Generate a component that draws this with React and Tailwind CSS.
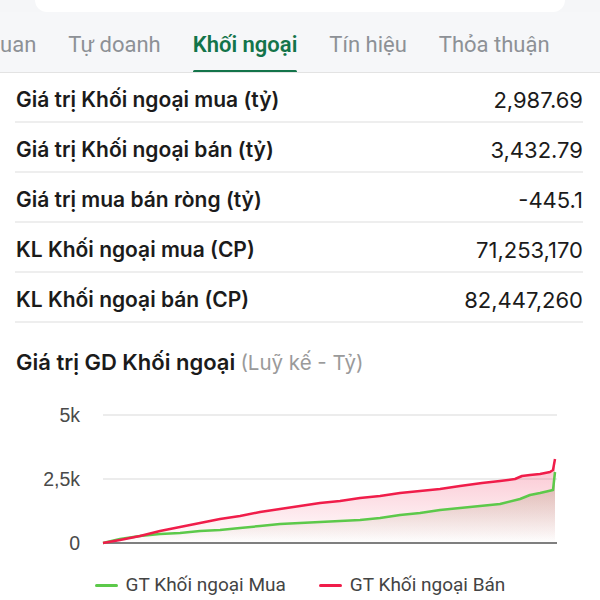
import React from 'react';

const tabs = ['Tổng quan', 'Tự doanh', 'Khối ngoại', 'Tín hiệu', 'Thỏa thuận'];

const rows = [
  { label: 'Giá trị Khối ngoại mua (tỷ)', value: '2,987.69' },
  { label: 'Giá trị Khối ngoại bán (tỷ)', value: '3,432.79' },
  { label: 'Giá trị mua bán ròng (tỷ)', value: '-445.1' },
  { label: 'KL Khối ngoại mua (CP)', value: '71,253,170' },
  { label: 'KL Khối ngoại bán (CP)', value: '82,447,260' },
];

// chart points, y measured from the top of the svg (baseline = 148)
const redPts = [
  [103, 148], [120, 145], [140, 141], [160, 136], [180, 132], [200, 128],
  [220, 124], [240, 121], [260, 117], [280, 114], [300, 111], [320, 108],
  [340, 106], [360, 103], [380, 101], [400, 98], [420, 96], [440, 94],
  [460, 91], [482, 88], [500, 86], [515, 84], [522, 81], [530, 80],
  [540, 79], [550, 77], [553, 75], [555, 64],
];

const greenPts = [
  [103, 148], [120, 144], [140, 141], [160, 139], [180, 138], [200, 136],
  [220, 135], [240, 133], [260, 131], [280, 129], [300, 128], [320, 127],
  [340, 126], [360, 125], [380, 123], [400, 120], [420, 118], [440, 115],
  [460, 113], [480, 111], [500, 109], [520, 104], [530, 100], [540, 98],
  [553, 95], [555, 77],
];

const toLine = pts => pts.map(p => p.join(',')).join(' ');
const toArea = pts =>
  `${toLine(pts)} ${pts[pts.length - 1][0]},148 ${pts[0][0]},148`;

const Chart = () => (
  <svg width="600" height="170" viewBox="0 0 600 170" className="block">
    <defs>
      <linearGradient id="redFill" x1="0" y1="0" x2="0" y2="1">
        <stop offset="0%" stopColor="#f0325a" stopOpacity="0.3" />
        <stop offset="100%" stopColor="#f0325a" stopOpacity="0" />
      </linearGradient>
      <linearGradient id="greenFill" x1="0" y1="0" x2="0" y2="1">
        <stop offset="0%" stopColor="#8a6a3c" stopOpacity="0.3" />
        <stop offset="100%" stopColor="#8a6a3c" stopOpacity="0" />
      </linearGradient>
    </defs>
    {/* grid */}
    <line x1="103" y1="20" x2="557" y2="20" stroke="#e6e6e6" strokeWidth="1.5" />
    <line x1="103" y1="84" x2="557" y2="84" stroke="#e6e6e6" strokeWidth="1.5" />
    <g
      fontFamily="'Liberation Sans', Arial, sans-serif"
      fontSize="19.5"
      fill="#4a4a4a"
      textAnchor="end"
    >
      <text x="80" y="27">5k</text>
      <text x="80" y="91">2,5k</text>
      <text x="80" y="155">0</text>
    </g>
    {/* areas */}
    <polygon points={toArea(redPts)} fill="url(#redFill)" />
    <polygon points={toArea(greenPts)} fill="url(#greenFill)" />
    <line x1="103" y1="148" x2="557" y2="148" stroke="#555" strokeWidth="1.5" />
    <polyline
      points={toLine(greenPts)}
      fill="none"
      stroke="#5cc94a"
      strokeWidth="2.5"
      strokeLinejoin="round"
    />
    <polyline
      points={toLine(redPts)}
      fill="none"
      stroke="#f01d4a"
      strokeWidth="2.5"
      strokeLinejoin="round"
    />
  </svg>
);

const App = () => {
  return (
    <div className="h-[600px] w-[600px] overflow-hidden bg-white">
      {/* Top card edge */}
      <div className="h-[12px] bg-[#f5f6f8]">
        <div className="mx-[35px] h-full rounded-b-[40px] bg-white" />
      </div>

      {/* Tabs */}
      <div className="h-[61px] overflow-hidden border-b border-[#e3e3e3] bg-[#f6f7f9]">
        <div
          className="flex h-full -ml-[67px] gap-[32px] whitespace-nowrap text-[22px]"
          style={{ fontFamily: 'Roboto, "Noto Sans", sans-serif' }}
        >
          {tabs.map(tab => (
            <div
              key={tab}
              className={`relative flex h-full items-center pt-[5px] ${
                tab === 'Khối ngoại'
                  ? 'font-semibold text-[#13744a]'
                  : 'text-[#8d9196]'
              }`}
            >
              {tab}
              {tab === 'Khối ngoại' && (
                <span className="absolute -bottom-[1px] left-0 right-0 h-[3px] rounded-full bg-[#13744a]" />
              )}
            </div>
          ))}
        </div>
      </div>

      {/* Summary rows */}
      <ul
        className="ml-[15px] mr-[17px]"
        style={{ fontFamily: 'Inter, "Noto Sans", sans-serif' }}
      >
        {rows.map(row => (
          <li
            key={row.label}
            className="flex h-[50px] items-center justify-between border-b-2 border-[#eeeeee] pl-[1px] pt-[6px] text-[21px] text-[#1b1b1b]"
          >
            <span className="font-semibold">{row.label}</span>
            <span className="text-[22px]">{row.value}</span>
          </li>
        ))}
      </ul>

      {/* Chart */}
      <section
        className="mt-[25px]"
        style={{ fontFamily: 'Inter, "Noto Sans", sans-serif' }}
      >
        <h3 className="px-[16px] text-[20.5px] leading-[28px] font-semibold text-[#1b1b1b]">
          <span className="text-[22px]">Giá trị GD Khối ngoại</span>{' '}
          <span className="font-normal text-[#9a9a9a]">(Luỹ kế - Tỷ)</span>
        </h3>
        <div className="mt-[18px]">
          <Chart />
        </div>
        <div
          className="mt-[9px] flex items-center justify-center gap-[33px] text-[19px] leading-[22px] text-[#444]"
          style={{ fontFamily: 'Roboto, "Noto Sans", sans-serif' }}
        >
          <div className="flex items-center gap-[8px]">
            <span className="h-[3px] w-[23px] rounded-full bg-[#5cc94a]" />
            GT Khối ngoại Mua
          </div>
          <div className="flex items-center gap-[8px]">
            <span className="h-[3px] w-[23px] rounded-full bg-[#f01d4a]" />
            GT Khối ngoại Bán
          </div>
        </div>
      </section>
    </div>
  );
};

export default App;
